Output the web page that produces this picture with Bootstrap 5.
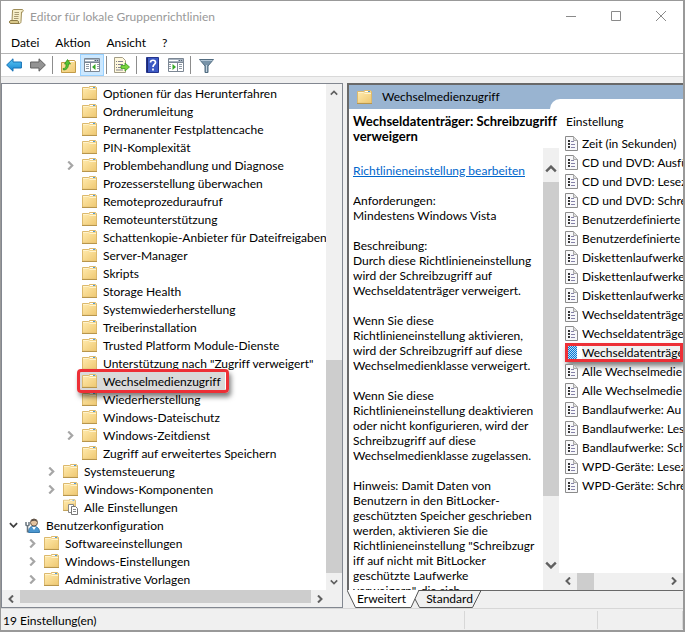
<!DOCTYPE html>
<html lang="de">
<head>
<meta charset="utf-8">
<meta name="viewport" content="width=device-width, initial-scale=1">
<title>Editor für lokale Gruppenrichtlinien</title>
<link rel="stylesheet" href="https://cdn.jsdelivr.net/npm/bootstrap@5.3.0/dist/css/bootstrap.min.css">
<style>
  body { font-family: Lato, "Noto Sans", sans-serif; font-size: 12px; line-height: 15px; font-variant-ligatures: none; color: #000; background: #999; }
  button { border: 0; background: none; padding: 0; color: inherit; line-height: inherit; }
  svg { display: block; flex: none; }
  .window { background: #f0f0f0; border: 1px solid #999; border-right-width: 2px; border-bottom-width: 2px; }
  .titlebar { height: 30px; color: #999; padding-left: 8px; gap: 6px; }
  .titlebar h1 { font-size: 12px; line-height: 15px; }
  .caption-btn { width: 45px; height: 29px; color: #8a8a8a; }
  .menubar { height: 22px; gap: 16px; padding-left: 10px; }
  .toolbar-row { height: 24px; border-top: 1px solid #b4b4b4; border-bottom: 1px solid #d9d9d9; padding-left: 1px; }
  .tool { width: 24px; height: 22px; display: flex; align-items: center; justify-content: center; }
  .tool.pressed { background: #cce8ff; border: 1px solid #99d1ff; }
  .tool-sep { width: 1px; height: 18px; background: #8d8d8d; margin: 0 3px 0 2px; }
  .workspace { display: grid; grid-template-columns: 342fr 336fr; gap: 4px; padding: 6px 0 0 0; min-height: 0; }
  .pane-tree { border: 1px solid #828790; }
  .tree-item { height: 18px; gap: 6px; white-space: nowrap; position: relative; }
  .tree-item .twisty { width: 12px; height: 18px; flex: none; display: flex; align-items: center; justify-content: center; color: #a6a6a6; }
  .tree-item.open .twisty { color: #404040; }
  .lvl-0 { padding-left: 5px; }
  .lvl-1 { padding-left: 24px; }
  .lvl-2 { padding-left: 43px; }
  .lvl-3 { padding-left: 62px; }
  .callout-box { position: absolute; border: 3px solid #ed2f36; border-radius: 4px; box-shadow: 2px 4px 5px rgba(0,0,0,.5); pointer-events: none; }
  .selected .callout-box { left: 75px; top: -3px; width: 152px; height: 24px; z-index: 2; }
  .selected .shade { position: absolute; left: 78px; width: 145px; top: 0; bottom: 0; background: #d9d9d9; }
  .selected > svg, .selected > .tree-text { position: relative; }
  .scroll-track { background: #f0f0f0; color: #606060; }
  .scroll-v { width: 16px; flex: none; }
  .scroll-h { height: 17px; flex: none; }
  .scroll-v button { height: 17px; display: flex; align-items: center; justify-content: center; }
  .scroll-v .tall-btn { height: 34px; padding-top: 8px; }
  .scroll-h button { width: 18px; display: flex; align-items: center; justify-content: center; }
  .scroll-h .corner { width: 13px; }
  .thumb { background: #cdcdcd; }
  .pane-detail { border-top: 2px solid #696969; border-left: 2px solid #696969; background: #fff; }
  .detail-head { height: 25px; background: #99b4d1; padding-left: 8px; gap: 10px; position: relative; }
  .detail-head::after { content: ""; position: absolute; left: 201px; right: 0; bottom: 0; height: 10px; background: #fff; border-top-left-radius: 10px; }
  .detail-text { width: 210px; flex: none; padding: 5px 0 0 4px; }
  .detail-text h2 { font-size: 13px; line-height: 15px; white-space: nowrap; }
  .description { white-space: nowrap; padding-top: 15px; }
  .description p { margin: 0 0 15px; }
  .description a { color: #0066cc; }
  .setting-head { height: 25px; padding: 5px 0 0 7px; line-height: 15px; }
  .setting { height: 19px; gap: 4px; padding-left: 6px; white-space: nowrap; position: relative; }
  .setting.marked .callout-box { inset: 0; left: 6px; border-radius: 0; }
  .setting.marked span { background: #f0f0f0; }
  .tab-strip { height: 19px; position: relative; }
  .tab-strip button { position: relative; }
  .tab-strip svg { position: absolute; left: 0; top: 0; }
  .tab-strip .first-tab { width: 69px; }
  .tab-strip .second-tab { width: 59px; margin-left: 4px; }
  .tab-line { border-top: 1px solid #696969; }
  .statusbar { border-top: 1px solid #d7d7d7; height: 22px; padding: 2px 0 1px; }
  .statusbar div { border-right: 1px solid #d7d7d7; padding-left: 2px; line-height: 19px; }
  .status-part { width: 133px; }
  .status-end { width: 85px; }
</style>
</head>
<body>
<svg width="0" height="0" class="position-absolute" aria-hidden="true">
  <defs>
    <linearGradient id="gold" x1="0" y1="0" x2="1" y2="1"><stop offset="0" stop-color="#ffe9ab"/><stop offset="1" stop-color="#efc973"/></linearGradient>
    <linearGradient id="blue" x1="0" y1="0" x2="0" y2="1"><stop offset="0" stop-color="#5cc8f5"/><stop offset="1" stop-color="#1583d0"/></linearGradient>
    <symbol id="folder" viewBox="0 0 15 14"><path d="M.5 13V1.500h6L7.500.5h6l1 1V13z" fill="#f3d58b" stroke="#dcb96d"/><path d="M8 1.500h5" stroke="#fff"/><path d="M11 1.500h2" stroke="#4a9be0"/><path d="M1 12.500V2.500h5.500L8 4h6v8.500z" fill="url(#gold)"/><path d="M1 2.500h5.500L8 3.500h6" fill="none" stroke="#fff3cc"/><path d="M0 13.500h15" stroke="#b8964c"/></symbol>
    <symbol id="sheet" viewBox="0 0 13 15"><path d="M.5.5h8l4 4v10H.5z" fill="#f8f8fa" stroke="#8b8b8b"/><path d="M8.500.5v4h4" fill="#ddd" stroke="#a8a8a8"/><path d="M3 5h2M3 8h2M3 11h2" stroke="#333" stroke-width="2"/><path d="M6 5.500h3M6 8.500h4M6 11.500h4" stroke="#8582a8"/></symbol>
    <symbol id="sheet-on" viewBox="0 0 13 15"><path d="M2 1h10v13H2z" fill="#b9dcf5"/><path d="M2 1.500h10M2 3.500h10M2 5.500h10M2 7.500h10M2 9.500h10M2 11.500h10M2 13.500h10" stroke="#0878d4" stroke-dasharray="1 1"/><path d="M3 2.500h9M3 4.500h9M3 6.500h9M3 8.500h9M3 10.500h9M3 12.500h9" stroke="#0878d4" stroke-dasharray="1 1"/></symbol>
    <symbol id="chev-r" viewBox="0 0 6 8"><path d="M1 .5 4.500 4 1 7.500" fill="none" stroke="currentColor" stroke-width="2"/></symbol>
    <symbol id="chev-d" viewBox="0 0 10 6"><path d="M1 1l4 4 4-4" fill="none" stroke="currentColor" stroke-width="2"/></symbol>
    <symbol id="chev-u" viewBox="0 0 10 6"><path d="M1 5l4-4 4 4" fill="none" stroke="currentColor" stroke-width="2"/></symbol>
    <symbol id="chev-l" viewBox="0 0 6 8"><path d="M5 .5 1.500 4 5 7.500" fill="none" stroke="currentColor" stroke-width="2"/></symbol>
    <symbol id="pane" viewBox="0 0 16 14"><path d="M.5.500h15v13H.5z" fill="#fff" stroke="#7c8794"/><path d="M1 1h14v3H1z" fill="#a7b3c0"/><path d="M1 2.500h9" stroke="#fff"/><path d="M11 2.500h4" stroke="#536273" stroke-dasharray="1 1"/><path d="M1 4.500h14" stroke="#7c8794"/></symbol>
  </defs>
</svg>

<div class="window vh-100 d-flex flex-column overflow-hidden">
  <header class="bg-white">
    <div class="titlebar d-flex align-items-center">
      <svg width="15" height="15" viewBox="0 0 15 15"><path d="M4.500.5h8.500c2 0 1.500 3-.5 2.500l-.5 9.500c0 1.500-.8 2-2 2H2c-2 0-2-3 0-3h1L3.500 2Q3.500.5 4.500.5z" fill="#f6eec9" stroke="#9e8d58"/><path d="M5.500 3.500H10M5.500 5.500H10M5 7.500h4.500M5 9.500h4.500" stroke="#a89a72"/><path d="M2 11.500h6.500c1.500.5.500 2.500 1.500 3H2c-2 0-2-3 0-3z" fill="#d9c88a" stroke="#8c7a46"/></svg>
      <h1 class="m-0 fw-normal flex-grow-1">Editor für lokale Gruppenrichtlinien</h1>
      <div class="d-flex">
        <button class="caption-btn" aria-label="Minimieren"><svg width="10" height="10" class="mx-auto"><path d="M0 5.500h10" stroke="currentColor"/></svg></button>
        <button class="caption-btn" aria-label="Maximieren"><svg width="10" height="10" class="mx-auto"><path d="M.5.500h9v9h-9z" fill="none" stroke="currentColor"/></svg></button>
        <button class="caption-btn" aria-label="Schließen"><svg width="10" height="10" class="mx-auto"><path d="M0 0l10 10M10 0 0 10" stroke="currentColor"/></svg></button>
      </div>
    </div>
    <nav class="menubar d-flex align-items-center" aria-label="Menü">
      <button>Datei</button><button>Aktion</button><button>Ansicht</button><button>?</button>
    </nav>
    <div class="toolbar-row d-flex align-items-center" role="toolbar" aria-label="Werkzeuge">
      <button class="tool" aria-label="Zurück"><svg width="16" height="14" viewBox="0 0 16 14"><path d="M.6 7 7 .8V4h8.400v6H7v3.200z" fill="url(#blue)" stroke="#1570b5"/></svg></button>
      <button class="tool" aria-label="Vorwärts"><svg width="16" height="14" viewBox="0 0 16 14"><path d="M15.400 7 9 .8V4H.6v6H9v3.200z" fill="#949494" stroke="#606060"/></svg></button>
      <span class="tool-sep"></span>
      <button class="tool" aria-label="Eine Ebene nach oben"><svg width="15" height="15" viewBox="0 0 15 15"><path d="M.5 14.500V4.500h5l1-2h7l1 1v11z" fill="url(#gold)" stroke="#c29b48"/><path d="M9 3.500h4" stroke="#fff"/><path d="M2 10.500c3 0 3-2 3-4.500H3.500L6.500 1.500 9.500 6H7.500c0 4-2 6-5 6z" fill="#55c232" stroke="#2c8c1a" stroke-width=".7"/></svg></button>
      <button class="tool pressed" aria-label="Konsolenstruktur" aria-pressed="true"><svg width="16" height="14" viewBox="0 0 16 14"><use href="#pane"/><path d="M6.500 5v9" stroke="#7c8794"/><path d="M2 6.500h3M2 8.500h3M2 10.500h3M13 6.500h2M13 8.500h2M13 10.500h2" stroke="#909ba6"/><path d="M11.500 6v6L8 9z" fill="#36a826"/></svg></button>
      <span class="tool-sep"></span>
      <button class="tool" aria-label="Liste exportieren"><svg width="16" height="16" viewBox="0 0 16 16"><path d="M.5.5h8l3 3v12H.5z" fill="#fff8dc" stroke="#a39d86"/><path d="M2 4.500h1M2 7.500h1M2 10.500h1M4 4.500h5M4 7.500h5M4 10.500h3M2 13h7" stroke="#80808f"/><path d="M7 8.500h4V6l4.500 4-4.500 4v-2.500H7z" fill="#7bd43e" stroke="#399c20" stroke-width=".8"/></svg></button>
      <span class="tool-sep"></span>
      <button class="tool" aria-label="Hilfe"><svg width="13" height="16" viewBox="0 0 13 16"><path d="M.5.5h12v15H.5z" fill="#3c59c4" stroke="#24348c"/><path d="M1.500 1v14" stroke="#1c2870"/><path d="M4.500 5.500c0-3 5-3 5 0 0 2-2.500 2-2.500 4.500M7 11.500v2" fill="none" stroke="#fff" stroke-width="1.700"/></svg></button>
      <button class="tool" aria-label="Aktionsbereich"><svg width="16" height="14" viewBox="0 0 16 14"><use href="#pane"/><path d="M9.500 5v9" stroke="#7c8794"/><path d="M11 6.500h3M11 8.500h3M11 10.500h3M1 6.500h2M1 8.500h2M1 10.500h2" stroke="#909ba6"/><path d="M4.500 6v6L8 9z" fill="#36a826"/></svg></button>
      <span class="tool-sep"></span>
      <button class="tool" aria-label="Filter"><svg width="15" height="15" viewBox="0 0 15 15"><path d="M.5 1.500h14L9 8v6.500H6V8z" fill="#7893a8" stroke="#526c80"/><path d="M1.500 2.500h12" stroke="#b4c7d6"/><path d="M7.500 7v7" stroke="#c3d3df"/></svg></button>
    </div>
  </header>

  <main class="workspace flex-grow-1 overflow-hidden">
    <section class="pane-tree bg-white d-flex flex-column overflow-hidden" aria-label="Konsolenstruktur">
      <div class="d-flex flex-grow-1 overflow-hidden">
        <ul class="list-unstyled m-0 flex-grow-1 overflow-hidden" id="tree"></ul>
        <div class="scroll-track scroll-v d-flex flex-column">
          <button aria-label="Nach oben"><svg width="8" height="6"><use href="#chev-u"/></svg></button>
          <div class="thumb mt-auto" style="height:42%"></div>
          <button aria-label="Nach unten"><svg width="8" height="6"><use href="#chev-d"/></svg></button>
        </div>
      </div>
      <div class="scroll-track scroll-h d-flex">
        <button aria-label="Nach links"><svg width="6" height="8"><use href="#chev-l"/></svg></button>
        <div class="thumb flex-grow-1 mb-1"></div>
        <button class="px-2" aria-label="Nach rechts"><svg width="6" height="8"><use href="#chev-r"/></svg></button>
        <span class="corner"></span>
      </div>
    </section>

    <section class="d-flex flex-column overflow-hidden" aria-label="Details">
      <div class="pane-detail flex-grow-1 d-flex flex-column overflow-hidden">
        <div class="detail-head d-flex align-items-center"><svg width="15" height="14"><use href="#folder"/></svg><span>Wechselmedienzugriff</span></div>
        <div class="d-flex flex-grow-1 overflow-hidden">
          <div class="detail-text d-flex flex-column">
            <h2 class="m-0 fw-bold">Wechseldatenträger: Schreibzugriff<br>verweigern</h2>
            <div class="d-flex flex-grow-1 overflow-hidden mt-1">
              <div class="description flex-grow-1 overflow-hidden">
                <p><a href="#">Richtlinieneinstellung bearbeiten</a></p>
                <p>Anforderungen:<br>Mindestens Windows Vista</p>
                <p>Beschreibung:<br>Durch diese Richtlinieneinstellung<br>wird der Schreibzugriff auf<br>Wechseldatenträger verweigert.</p>
                <p>Wenn Sie diese<br>Richtlinieneinstellung aktivieren,<br>wird der Schreibzugriff auf diese<br>Wechselmedienklasse verweigert.</p>
                <p>Wenn Sie diese<br>Richtlinieneinstellung deaktivieren<br>oder nicht konfigurieren, wird der<br>Schreibzugriff auf diese<br>Wechselmedienklasse zugelassen.</p>
                <p>Hinweis: Damit Daten von<br>Benutzern in den BitLocker-<br>geschützten Speicher geschrieben<br>werden, aktivieren Sie die<br>Richtlinieneinstellung "Schreibzugr<br>iff auf nicht mit BitLocker<br>geschützte Laufwerke<br>verweigern", die sich</p>
              </div>
              <div class="scroll-track scroll-v d-flex flex-column">
                <button class="tall-btn" aria-label="Nach oben"><svg width="12" height="8"><use href="#chev-u"/></svg></button>
                <div class="thumb" style="height:71%"></div>
                <button class="mt-auto mb-3" aria-label="Nach unten"><svg width="12" height="8"><use href="#chev-d"/></svg></button>
              </div>
            </div>
          </div>
          <div class="flex-grow-1 d-flex flex-column overflow-hidden">
            <div class="setting-head">Einstellung</div>
            <ul class="list-unstyled m-0 flex-grow-1 overflow-hidden" id="settings"></ul>
            <div class="scroll-track scroll-h d-flex">
              <button aria-label="Nach links"><svg width="6" height="8"><use href="#chev-l"/></svg></button>
              <div class="thumb" style="width:14%"></div>
              <button class="ms-auto" aria-label="Nach rechts"><svg width="6" height="8"><use href="#chev-r"/></svg></button>
            </div>
          </div>
        </div>
      </div>
      <div class="tab-strip d-flex" role="tablist">
        <svg width="135" height="19" aria-hidden="true"><path d="M69 .5h65L125.500 17.500H72.500L68 9" fill="#f0f0f0" stroke="#555"/><path d="M0 0l8.500 17.500H64L72 0z" fill="#fff"/><path d="M0 0l8.500 17.500H64L72 0" fill="none" stroke="#555"/></svg>
        <button class="first-tab" role="tab" aria-selected="true">Erweitert</button>
        <button class="second-tab" role="tab" aria-selected="false">Standard</button>
        <div class="tab-line flex-grow-1"></div>
      </div>
    </section>
  </main>

  <footer class="statusbar d-flex">
    <div class="flex-grow-1">19 Einstellung(en)</div><div class="status-part"></div><div class="status-end"></div>
  </footer>
</div>

<script src="https://cdn.jsdelivr.net/npm/bootstrap@5.3.0/dist/js/bootstrap.bundle.min.js"></script>
<script>
  // level, text, state: "" leaf, "+" collapsed, "-" expanded, "*" selected
  const nodes = [
    [3, "Optionen für das Herunterfahren", ""], [3, "Ordnerumleitung", ""], [3, "Permanenter Festplattencache", ""],
    [3, "PIN-Komplexität", ""], [3, "Problembehandlung und Diagnose", "+"], [3, "Prozesserstellung überwachen", ""],
    [3, "Remoteprozeduraufruf", ""], [3, "Remoteunterstützung", ""], [3, "Schattenkopie-Anbieter für Dateifreigaben", ""],
    [3, "Server-Manager", ""], [3, "Skripts", ""], [3, "Storage Health", ""], [3, "Systemwiederherstellung", ""],
    [3, "Treiberinstallation", ""], [3, "Trusted Platform Module-Dienste", ""], [3, "Unterstützung nach \"Zugriff verweigert\"", ""],
    [3, "Wechselmedienzugriff", "*"], [3, "Wiederherstellung", ""], [3, "Windows-Dateischutz", ""], [3, "Windows-Zeitdienst", "+"],
    [3, "Zugriff auf erweitertes Speichern", ""], [2, "Systemsteuerung", "+"], [2, "Windows-Komponenten", "+"],
    [2, "Alle Einstellungen", "", "all"], [0, "Benutzerkonfiguration", "-", "user"], [1, "Softwareeinstellungen", "+"],
    [1, "Windows-Einstellungen", "+"], [1, "Administrative Vorlagen", "+"]
  ];
  const icons = {
    folder: '<svg width="15" height="14"><use href="#folder"/></svg>',
    all: '<svg width="15" height="16" viewBox="0 0 15 16"><use href="#folder" width="13" height="12"/><path d="M5.500 5.500h5v8h-5z" fill="#fff" stroke="#888"/><path d="M8.500 7.500h4l2 2v6h-6z" fill="#fff" stroke="#777"/><path d="M10 10.500h3M10 12.500h3" stroke="#888"/></svg>',
    user: '<svg width="15" height="15" viewBox="0 0 15 15"><path d="M3.500 14.500c0-5 2-6 5-6s6 1 6 6z" fill="#4b96cf" stroke="#3678ab"/><path d="M7 9l2 3 2-3z" fill="#fff"/><circle cx="9" cy="4.500" r="3.500" fill="#e5c39f" stroke="#6b5a4b"/><path d="M6 3.500C6 0 12 0 12 4 10 2 8 3 6 3.500z" fill="#5b5048"/><path d="M1 4v3l1.500 1L4 7V4M2.500 8v6.500" fill="none" stroke="#68747d" stroke-width="1.500"/></svg>'
  };
  document.getElementById("tree").innerHTML = nodes.map(([lvl, text, st, icon]) => {
    const twisty = st === "+" ? '<button class="twisty" aria-label="Erweitern"><svg width="7" height="9"><use href="#chev-r"/></svg></button>'
      : st === "-" ? '<button class="twisty" aria-label="Reduzieren"><svg width="9" height="6"><use href="#chev-d"/></svg></button>'
      : '<span class="twisty"></span>';
    const cls = st === "*" ? " selected" : st === "-" ? " open" : "";
    return `<li class="tree-item d-flex align-items-center lvl-${lvl}${cls}">${st === "*" ? '<span class="shade"></span>' : ""}${twisty}${icons[icon || "folder"]}<span class="tree-text">${text}</span>${st === "*" ? '<span class="callout-box"></span>' : ""}</li>`;
  }).join("");

  const settings = ["Zeit (in Sekunden)", "CD und DVD: Ausfü", "CD und DVD: Lesez", "CD und DVD: Schre",
    "Benutzerdefinierte", "Benutzerdefinierte", "Diskettenlaufwerke", "Diskettenlaufwerke",
    "Diskettenlaufwerke", "Wechseldatenträge", "Wechseldatenträge", "Wechseldatenträge",
    "Alle Wechselmedie", "Alle Wechselmedie", "Bandlaufwerke: Au", "Bandlaufwerke: Les",
    "Bandlaufwerke: Sch", "WPD-Geräte: Lesez", "WPD-Geräte: Schre"];
  document.getElementById("settings").innerHTML = settings.map((t, i) =>
    `<li class="setting d-flex align-items-center${i === 11 ? " marked" : ""}"><svg width="13" height="15"><use href="#sheet${i === 11 ? "-on" : ""}"/></svg><span>${t}</span>${i === 11 ? '<i class="callout-box"></i>' : ""}</li>`).join("");
</script>
</body>
</html>
